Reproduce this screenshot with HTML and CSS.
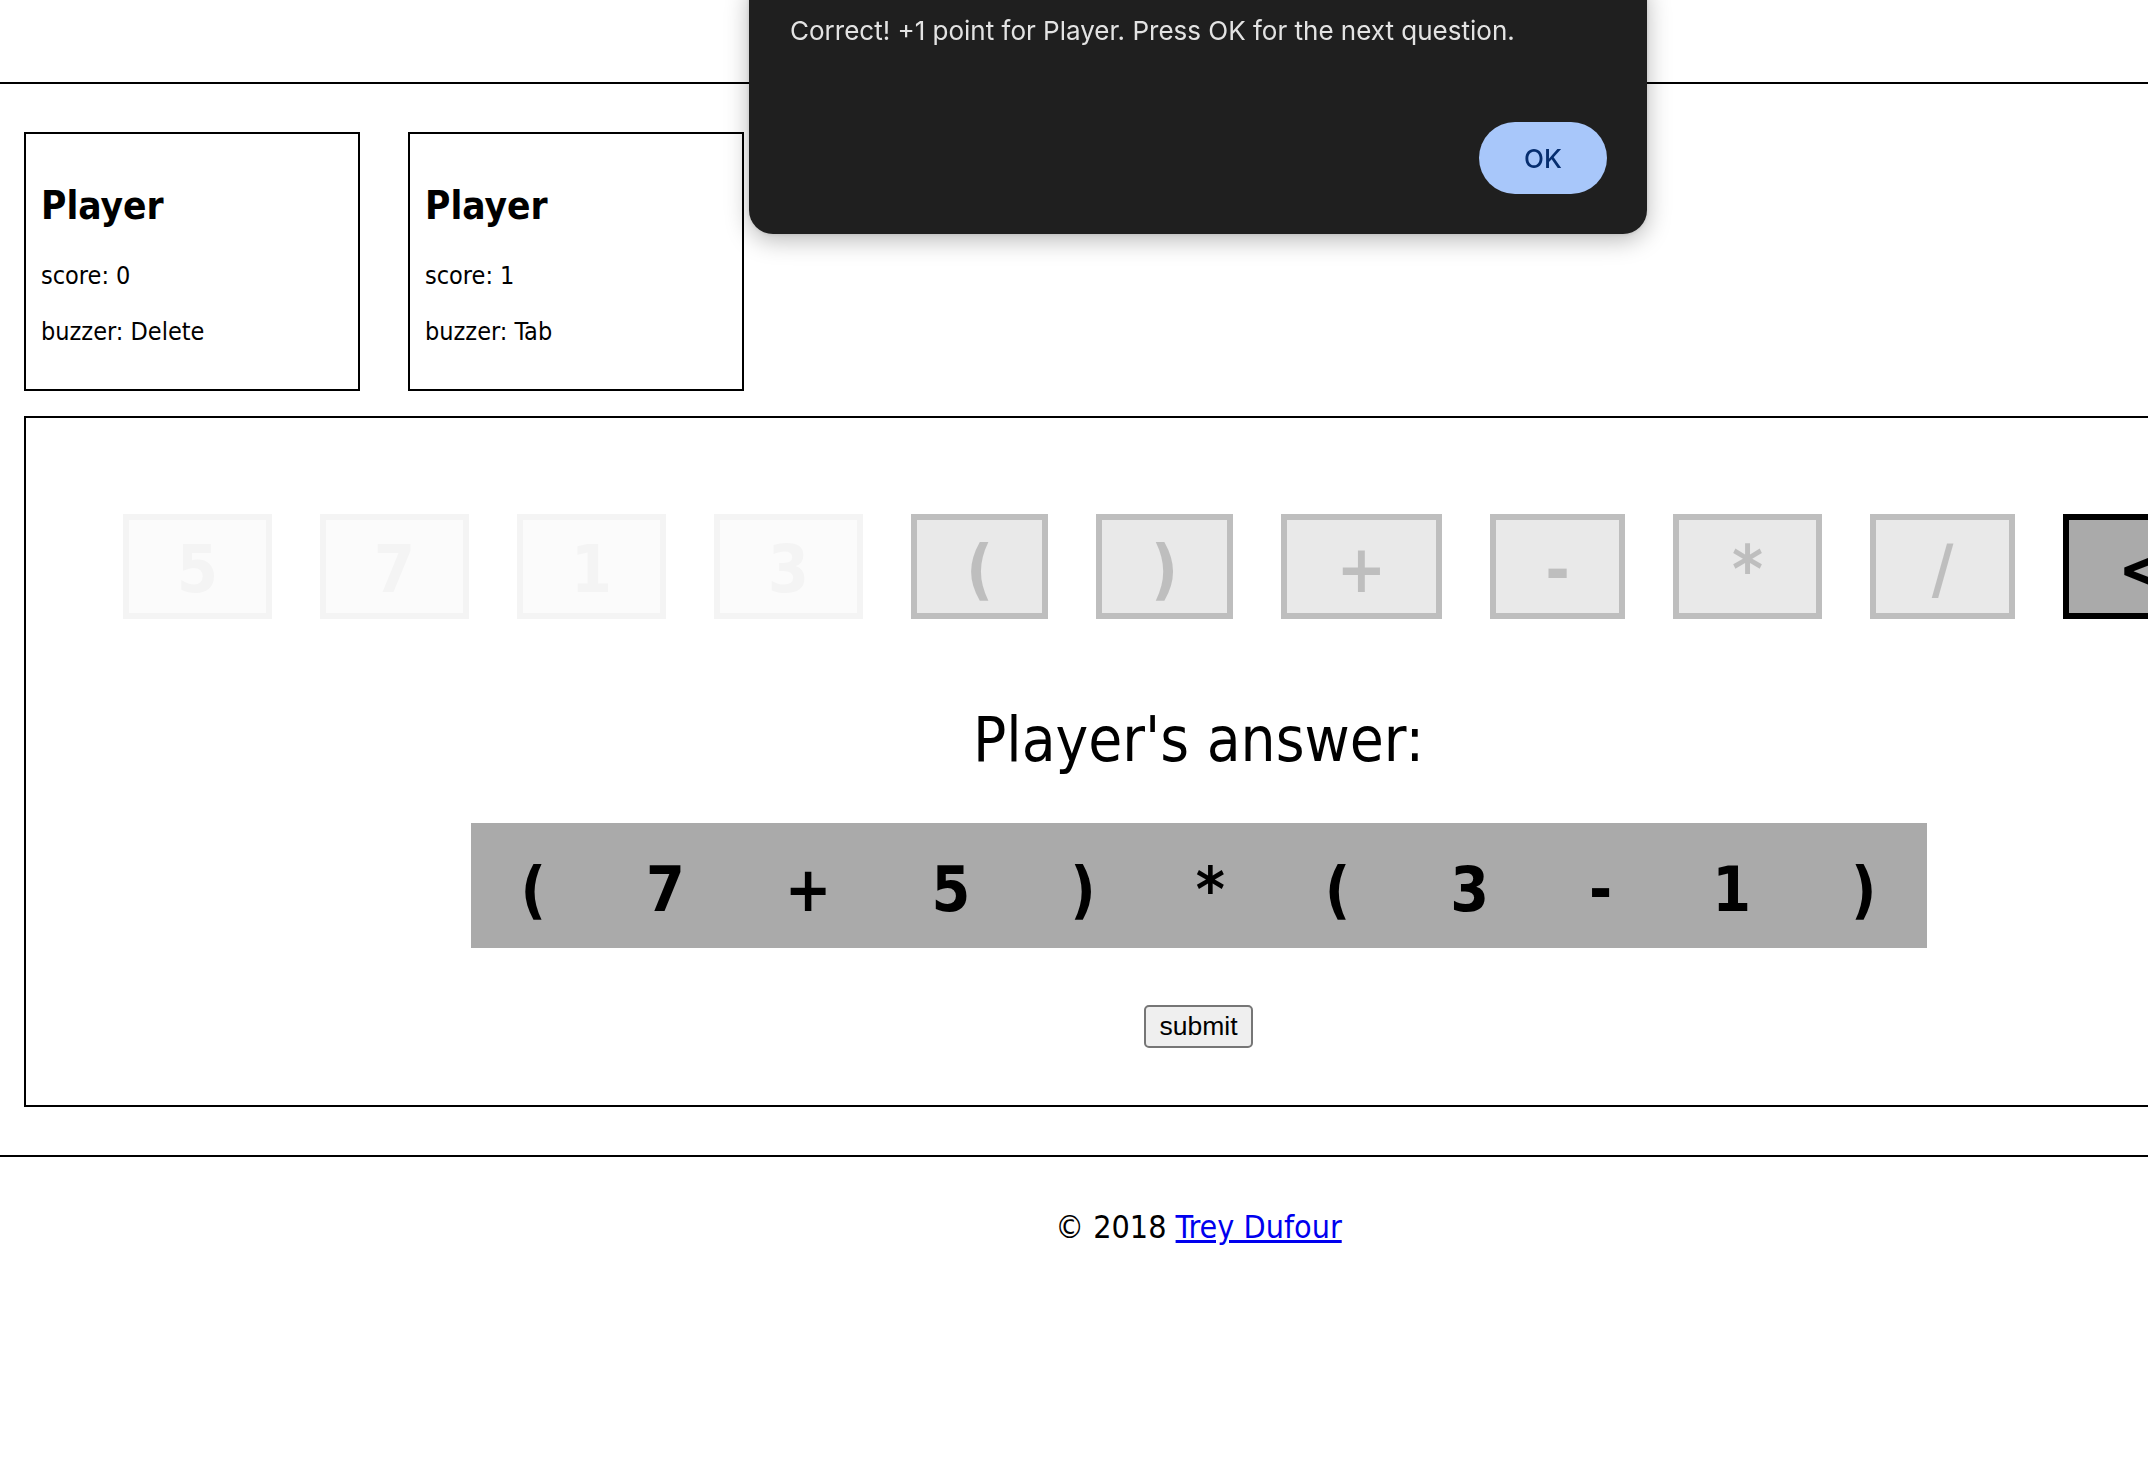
FILE: index.html
```html
<!DOCTYPE html>
<html lang="en">
<head>
<meta charset="utf-8">
<title>24 Game</title>
<link rel="stylesheet" href="styles.css">
</head>
<body>
<div class="page">
  <header class="top-bar"></header>

  <section class="players">
    <div class="player-card">
      <h2 class="player-name">Player</h2>
      <p class="player-line">score: 0</p>
      <p class="player-line">buzzer: Delete</p>
    </div>
    <div class="player-card">
      <h2 class="player-name">Player</h2>
      <p class="player-line">score: 1</p>
      <p class="player-line">buzzer: Tab</p>
    </div>
  </section>

  <main class="board">
    <div class="keys">
      <div class="key num used">5</div>
      <div class="key num used">7</div>
      <div class="key num used">1</div>
      <div class="key num used">3</div>
      <div class="key paren disabled">(</div>
      <div class="key paren disabled">)</div>
      <div class="key plus disabled">+</div>
      <div class="key minus disabled">-</div>
      <div class="key times disabled">*</div>
      <div class="key div disabled">/</div>
      <div class="key back">&lt;</div>
    </div>

    <h2 class="answer-title">Player's answer:</h2>

    <div class="answer">
      <span class="token">(</span>
      <span class="token">7</span>
      <span class="token">+</span>
      <span class="token">5</span>
      <span class="token">)</span>
      <span class="token">*</span>
      <span class="token">(</span>
      <span class="token">3</span>
      <span class="token">-</span>
      <span class="token">1</span>
      <span class="token">)</span>
    </div>

    <div class="submit-row">
      <button class="submit" type="button">submit</button>
    </div>
  </main>

  <footer class="footer">
    <p class="copy">© 2018 <a href="#">Trey Dufour</a></p>
  </footer>
</div>

<div class="dialog">
  <p class="dialog-text">Correct! +1 point for Player. Press OK for the next question.</p>
  <div class="dialog-actions">
    <button class="dialog-ok" type="button">OK</button>
  </div>
</div>
</body>
</html>
```

FILE: styles.css
```css
html, body {
  margin: 0;
  padding: 0;
  background: #fff;
}

body {
  overflow-x: hidden;
  font-family: "DejaVu Sans Condensed", "DejaVu Sans", Verdana, sans-serif;
  font-stretch: condensed;
  color: #000;
}

.page {
  width: 2397px;
}

.top-bar {
  height: 82px;
  border-bottom: 2px solid #000;
}

.players {
  display: flex;
  gap: 48px;
  padding: 48px 24px 0;
}

.player-card {
  width: 336px;
  box-sizing: border-box;
  border: 2px solid #000;
  padding: 16px 15px;
}

.player-name {
  font-size: 38.5px;
  font-weight: bold;
  line-height: 47px;
  margin: 32px 0;
}

.player-line {
  font-size: 25px;
  line-height: 30px;
  margin: 26px 0;
}

.board {
  display: block;
  margin: 25px 24px 0;
  border: 2px solid #000;
  padding: 96px 0 57px;
}

.keys {
  display: flex;
  gap: 48px;
  padding-left: 97px;
  white-space: nowrap;
}

.key {
  flex: none;
  box-sizing: border-box;
  height: 105px;
  border: 6px solid #000;
  background: #aaa;
  color: #000;
  font-size: 66px;
  font-weight: bold;
  line-height: 87px;
  padding-top: 6px;
  text-align: center;
}

.key.num { width: 149px; }
.key.paren { width: 137px; }
.key.plus { width: 161px; }
.key.minus { width: 135px; }
.key.times { width: 149px; }
.key.div { width: 145px; }
.key.back { width: 211px; text-align: left; padding-left: 49px; }

.key.used { opacity: 0.04; }
.key.disabled { opacity: 0.25; }

.answer-title {
  margin: 85px 0 0;
  font-size: 61.5px;
  font-weight: normal;
  line-height: 72px;
  text-align: center;
}

.answer {
  width: 1456px;
  height: 125px;
  box-sizing: border-box;
  margin: 47px auto 0;
  padding-top: 8px;
  background: #aaa;
  display: flex;
  justify-content: space-around;
  font-size: 62px;
  font-weight: bold;
  line-height: 117px;
}

.submit-row {
  margin-top: 57px;
  text-align: center;
}

.submit {
  width: 109px;
  height: 43px;
  box-sizing: border-box;
  padding: 0 10px;
  border: 2px solid #767676;
  border-radius: 5px;
  background: #efefef;
  color: #000;
  font-family: "Liberation Sans", Arial, sans-serif;
  font-size: 26.5px;
  line-height: 37px;
}

.footer {
  margin-top: 48px;
  border-top: 2px solid #000;
  padding-top: 51px;
}

.copy {
  margin: 0;
  font-size: 32px;
  line-height: 38px;
  text-align: center;
}

.copy a {
  color: #0000ee;
  text-decoration: underline;
}

.dialog {
  position: fixed;
  left: 749px;
  top: -24px;
  width: 898px;
  height: 258px;
  box-sizing: border-box;
  padding: 40px 40px 40px 41px;
  background: #1f1f1f;
  border-radius: 24px;
  box-shadow: 0 6px 24px rgba(0, 0, 0, 0.28), 0 0 4px rgba(0, 0, 0, 0.12);
  display: flex;
  flex-direction: column;
  justify-content: space-between;
  font-family: Inter, "Noto Sans", sans-serif;
  font-stretch: normal;
}

.dialog-text {
  margin: 0;
  color: #e3e3e3;
  font-size: 26px;
  line-height: 30px;
}

.dialog-actions {
  display: flex;
  justify-content: flex-end;
}

.dialog-ok {
  width: 128px;
  height: 72px;
  border: none;
  border-radius: 36px;
  background: #a8c7fa;
  color: #062e6f;
  font-family: Inter, "Noto Sans", sans-serif;
  font-size: 26px;
  font-weight: 500;
}
```
